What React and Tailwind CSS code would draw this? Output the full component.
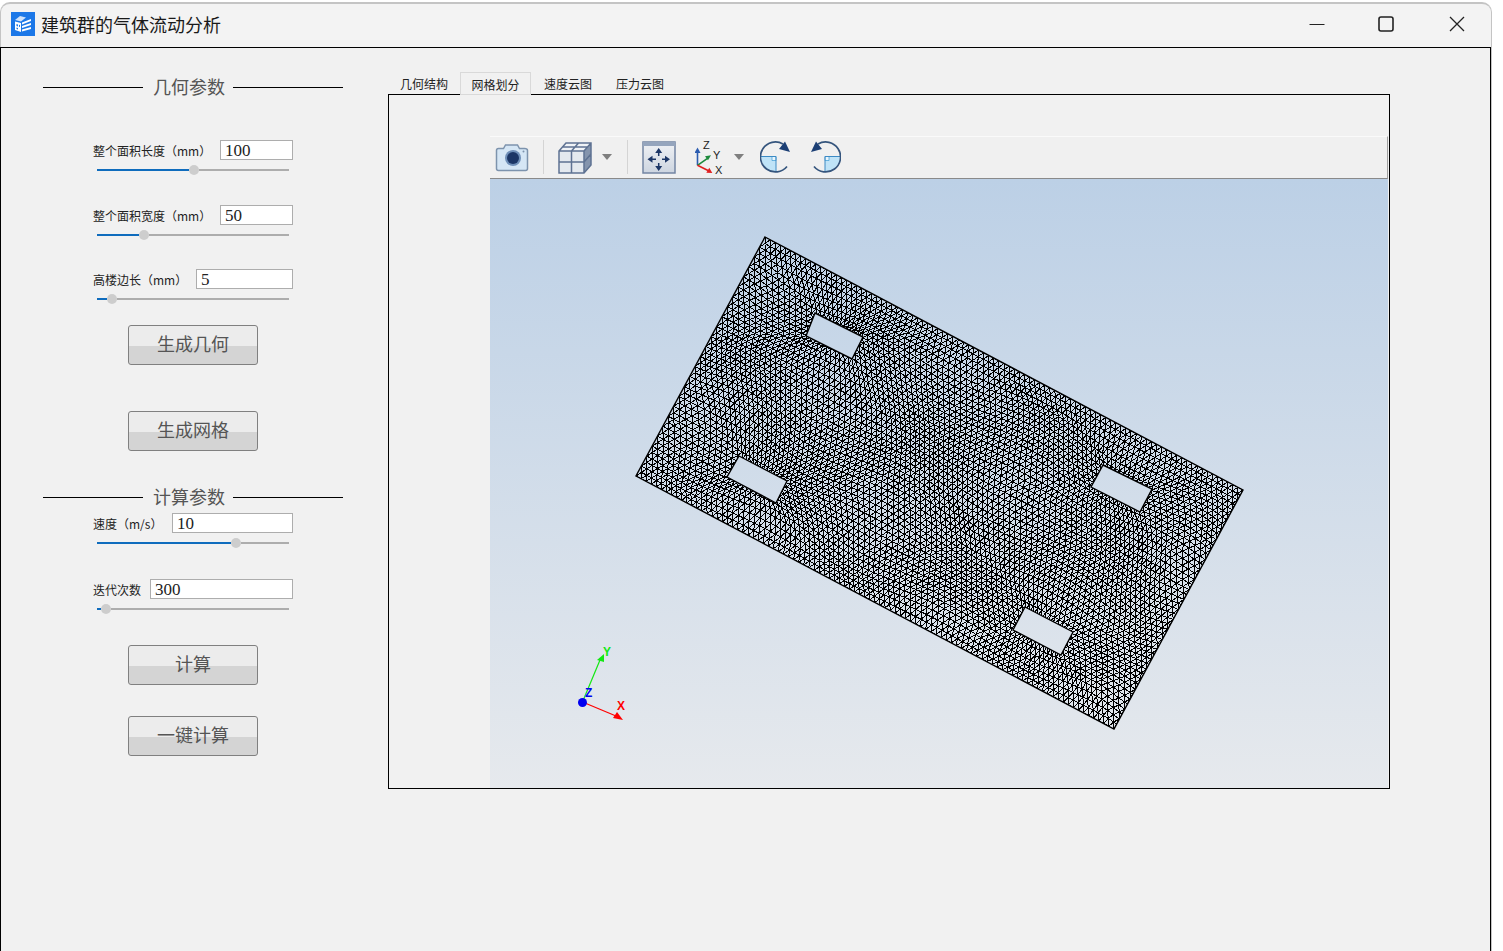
import React from 'react';

const CJK = 'font-["Noto_Sans_CJK_SC","Noto_Sans",sans-serif]';

// page coordinates of the mesh outline and its four holes
const A = [765, 237];
const B = [1243, 490];
const D = [636, 476];
const HOLES = [
  [[815, 313], [863, 337], [852, 359], [806, 336]],
  [[739, 456], [787, 481], [776, 503], [727, 477]],
  [[1103, 465], [1152, 489], [1140, 512], [1091, 487]],
  [[1025, 607], [1073, 632], [1061, 655], [1013, 630]],
];

function polyPath(points) {
  return 'M' + points.map((p) => p[0] + ' ' + p[1]).join('L') + 'Z';
}

function buildMesh() {
  const L = Math.hypot(B[0] - A[0], B[1] - A[1]);
  const H = Math.hypot(D[0] - A[0], D[1] - A[1]);
  const e = [(B[0] - A[0]) / L, (B[1] - A[1]) / L];
  const f = [(D[0] - A[0]) / H, (D[1] - A[1]) / H];
  const toLocal = (p) => {
    const dx = p[0] - A[0];
    const dy = p[1] - A[1];
    const det = e[0] * f[1] - e[1] * f[0];
    return [(dx * f[1] - dy * f[0]) / det, (dy * e[0] - dx * e[1]) / det];
  };
  const centers = HOLES.map((h) => {
    const pts = h.map(toLocal);
    return [pts.reduce((s, p) => s + p[0], 0) / 4, pts.reduce((s, p) => s + p[1], 0) / 4];
  });

  const warp = (u, v) => {
    const edge = Math.min(u, L - u, v, H - v);
    const w = Math.min(edge / 24, 1);
    let du = 0;
    let dv = 0;
    centers.forEach(([cu, cv]) => {
      const nx = (u - cu) / 27;
      const ny = (v - cv) / 13;
      const d = Math.max(Math.abs(nx), Math.abs(ny), 0.001);
      const k = -0.72 * Math.exp(-d / 1.1);
      du += (u - cu) * k;
      dv += (v - cv) * k;
    });
    du += 4 * Math.sin(v / 24) * Math.sin(u / 38);
    dv += 4 * Math.sin(u / 30) * Math.sin(v / 33);
    const x = u + du * w;
    const y = v + dv * w;
    return [
      Math.round((A[0] + e[0] * x + f[0] * y) * 10) / 10,
      Math.round((A[1] + e[1] * x + f[1] * y) * 10) / 10,
    ];
  };

  const nu = 94;
  const nv = 48;
  let d = '';
  for (let j = 0; j <= nv; j++) {
    for (let i = 0; i <= nu; i++) {
      const off = j % 2 ? 0.5 : 0;
      const u = (Math.min(i + off, nu) * L) / nu;
      const v = (j * H) / nv;
      const p = warp(u, v);
      const seg = (q) => {
        d += 'M' + p[0] + ' ' + p[1] + 'L' + q[0] + ' ' + q[1];
      };
      if (i < nu) seg(warp((Math.min(i + 1 + off, nu) * L) / nu, v));
      if (j < nv) {
        const v2 = ((j + 1) * H) / nv;
        const off2 = j % 2 ? 0 : 0.5;
        seg(warp((Math.min(i + off2, nu) * L) / nu, v2));
        const other = j % 2 ? i + 1 : i - 1;
        if (other >= 0 && other <= nu) seg(warp((Math.min(other + off2, nu) * L) / nu, v2));
      }
    }
  }
  return d;
}

const C = [1114, 729];
const OUTLINE = polyPath([A, B, C, D]);
const HOLE_PATH = HOLES.map(polyPath).join('');
const MESH = buildMesh();

function Logo() {
  return (
    <svg width="24" height="24" viewBox="0 0 24 24" className="shrink-0">
      <rect width="24" height="24" fill="#1c78e8" />
      <path d="M4 8L9 4l6 1.500L10 9.500z" fill="#cfe2fa" />
      <path d="M4 9.500L10 11v9l-6-2z" fill="#fff" />
      <path d="M5.500 12l1.500.4v2l-1.500-.4zM8 12.700l1 .3v2l-1-.3zM5.500 15.500l1.500.4v1.600l-1.500-.4z" fill="#1c78e8" />
      <path d="M11 10.500L20 7v2l-9 3.500zM11 14l9-3v2l-9 3zM11 17.500l9-2.500v2l-9 2.500z" fill="#fff" />
    </svg>
  );
}

function WindowControls() {
  return (
    <div className="flex items-center">
      <svg width="16" height="16" viewBox="0 0 16 16" className="mr-[53px]">
        <path d="M0.500 8.500h15" stroke="#222" strokeWidth="1" />
      </svg>
      <svg width="16" height="16" viewBox="0 0 16 16" className="mr-[55px]">
        <rect x="1" y="1" width="14" height="14" rx="2" fill="none" stroke="#222" strokeWidth="1.600" />
      </svg>
      <svg width="16" height="16" viewBox="0 0 16 16">
        <path d="M1 1l14 14M15 1L1 15" stroke="#222" strokeWidth="1.300" />
      </svg>
    </div>
  );
}

function Section({ title, className }) {
  return (
    <div className={`flex items-center ml-[42px] w-[300px] h-[24px] ${className}`}>
      <div className="w-[100px] h-px bg-black" />
      <div className={`${CJK} w-[90px] pl-[2px] -translate-y-px text-center text-[18px] leading-[24px] text-[#555]`}>{title}</div>
      <div className="w-[110px] h-px bg-black" />
    </div>
  );
}

function ParamRow({ label, labelClass, value, thumb, className }) {
  return (
    <div className={`ml-[92px] w-[200px] ${className}`}>
      <div className="flex items-center h-[20px]">
        <div className={`${CJK} ${labelClass} shrink-0 translate-y-px text-[12px] leading-[20px] text-[#222] whitespace-nowrap`}>{label}</div>
        <input
          readOnly
          value={value}
          className='flex-1 min-w-0 h-[20px] border border-[#adadad] bg-white pl-[4px] pt-[2px] font-["Liberation_Serif",serif] text-[17px] leading-[18px] text-[#222] outline-none'
        />
      </div>
      <div className="flex items-center ml-[4px] w-[192px] h-[10px] mt-[5px]">
        <div className="h-[2px] bg-[#0f6cbd]" style={{ width: thumb - 102 }} />
        <div className="w-[10px] h-[10px] shrink-0 rounded-full bg-[#cdcdcd]" />
        <div className="flex-1 h-[2px] bg-[#adadad]" />
      </div>
    </div>
  );
}

function ActionButton({ label, className }) {
  return (
    <div
      className={`${CJK} ml-[127px] w-[130px] h-[40px] pb-[4px] flex items-center justify-center border border-[#808080] rounded-[3px] bg-[linear-gradient(#ececec_52%,#d4d4d4_52%)] text-[18px] text-[#555] ${className}`}
    >
      {label}
    </div>
  );
}

function Caret() {
  return (
    <svg width="10" height="6" viewBox="0 0 10 6" className="shrink-0">
      <path d="M0 0h10L5 6z" fill="#7f7f7f" />
    </svg>
  );
}

function CameraIcon() {
  return (
    <svg width="34" height="29" viewBox="0 0 34 29" className="shrink-0">
      <path d="M1.500 7.500q0-2 2-2h5l2-3.500h12l2 3.500h5q3 0 3 2v18q0 2-2 2h-27q-2 0-2-2z" fill="#d5e6f5" stroke="#7d93ad" strokeWidth="1.500" />
      <circle cx="18" cy="15" r="8" fill="#6f8fb8" />
      <circle cx="18" cy="15" r="6" fill="#1c3666" />
      <circle cx="28.500" cy="8.500" r="1" fill="#7d93ad" />
    </svg>
  );
}

function CubeIcon() {
  return (
    <svg width="34" height="33" viewBox="0 0 34 33" className="shrink-0">
      <path d="M1 10l7-8h25v22l-7 8H1z" fill="#e4e9ef" />
      <path d="M26 10l7-8v22l-7 8z" fill="#8494ad" />
      <path d="M1 10l7-8h25l-7 8z" fill="#f0f3f6" />
      <path d="M1 10l7-8h25v22l-7 8H1zM1 10h25v22M26 10l7-8M13.500 10v22M1 21h25M13.500 10l7-8M5 6h25M26 21l7-8" fill="none" stroke="#5e7292" strokeWidth="1.500" />
    </svg>
  );
}

function FitIcon() {
  return (
    <svg width="34" height="33" viewBox="0 0 34 33" className="shrink-0">
      <defs>
        <linearGradient id="fitBg" x1="0" y1="0" x2="0" y2="1">
          <stop offset="0" stopColor="#f0f2f5" />
          <stop offset="1" stopColor="#cdd5e0" />
        </linearGradient>
      </defs>
      <rect x="1" y="1" width="32" height="31" fill="url(#fitBg)" stroke="#7385a3" strokeWidth="1.500" />
      <rect x="1" y="1" width="32" height="4" fill="#95a5bd" />
      <path d="M16.700 11v4M16.700 22v4M10 18.300h4M20 18.300h4" stroke="#1c3666" strokeWidth="1.500" />
      <path d="M16.700 7l-3.500 5h7zM16.700 30l-3.500-5h7zM5.500 18.300l5-3.500v7zM28 18.300l-5-3.500v7z" fill="#1c3666" />
    </svg>
  );
}

function AxesIcon() {
  return (
    <svg width="29" height="39" viewBox="0 -3 29 39" className="shrink-0">
      <path d="M2.500 24.300V10" stroke="#2b5cb0" strokeWidth="1.600" />
      <path d="M2.500 6.500l-3 5.500h6z" fill="#2b5cb0" />
      <path d="M2.500 24.300l10-7" stroke="#1d8a3c" strokeWidth="1.600" />
      <path d="M16 14.300l-6 1 3 4z" fill="#1d8a3c" />
      <path d="M2.500 24.300l11 5.500" stroke="#e02020" strokeWidth="1.600" />
      <path d="M17.300 32l-6-.2 3-5z" fill="#e02020" />
      <text x="8" y="8" fontSize="11" fontFamily="Liberation Sans" fill="#222">Z</text>
      <text x="18" y="18" fontSize="11" fontFamily="Liberation Sans" fill="#222">Y</text>
      <text x="20" y="33" fontSize="11" fontFamily="Liberation Sans" fill="#222">X</text>
    </svg>
  );
}

function RotateIcon({ flip }) {
  return (
    <svg width="32" height="32" viewBox="0 0 32 32" className={flip ? 'shrink-0 -scale-x-100' : 'shrink-0'}>
      <path d="M1 15.500a15 15 0 0 0 15 15v-15z" fill="#bfe3f7" />
      <path d="M12 15.500h4v4h-4z" fill="#e9f6fd" stroke="#3c9ad2" strokeWidth="0.700" />
      <path d="M0.500 15.500H16v15" fill="none" stroke="#3c8ac4" strokeWidth="1" />
      <path d="M23 3A15 15 0 1 0 27 25.500" fill="none" stroke="#35557d" strokeWidth="1.700" />
      <path d="M25 0.500L30 11 19 8z" fill="#1c3f75" />
    </svg>
  );
}

function Toolbar() {
  return (
    <div className="flex items-center h-[43px] shrink-0 bg-[#f0f0f0] border-t border-t-[#fafafa] border-b border-b-[#8a8a8a] border-r border-r-[#a0a0a0] pl-[5px] pb-px">
      <CameraIcon />
      <div className="w-px h-[34px] bg-[#d4d4d4] ml-[14px] mr-[14px] shrink-0" />
      <CubeIcon />
      <div className="ml-[10px]"><Caret /></div>
      <div className="w-px h-[34px] bg-[#d4d4d4] ml-[15px] mr-[14px] shrink-0" />
      <FitIcon />
      <div className="ml-[19px]"><AxesIcon /></div>
      <div className="ml-[10px]"><Caret /></div>
      <div className="ml-[16px]"><RotateIcon /></div>
      <div className="ml-[17px]"><RotateIcon flip /></div>
    </div>
  );
}

function MeshView() {
  return (
    <svg viewBox="490 179 898 609" className="flex-1 w-full bg-[linear-gradient(#bcd0e6,#e6e9ed)]">
      <defs>
        <clipPath id="meshClip">
          <path d={OUTLINE + HOLE_PATH} clipRule="evenodd" />
        </clipPath>
      </defs>
      <path d={MESH} clipPath="url(#meshClip)" fill="none" stroke="#000" strokeWidth="1" shapeRendering="crispEdges" />
      <path d={OUTLINE + HOLE_PATH} fill="none" stroke="#000" strokeWidth="1.400" />

      <path d="M582.500 702L600 660" stroke="#12e812" strokeWidth="1.200" fill="none" />
      <path d="M604 654L597 660 604 662z" fill="#12e812" />
      <path d="M582.500 702L616 716" stroke="#f00" strokeWidth="1.200" fill="none" />
      <path d="M623 720L613 718 617 712z" fill="#f00" />
      <circle cx="582.500" cy="702.500" r="4.500" fill="#0000f0" />
      <text x="603" y="656" fontSize="12" fontWeight="bold" fontFamily="Liberation Sans" fill="#12e812">Y</text>
      <text x="585" y="697" fontSize="12" fontWeight="bold" fontFamily="Liberation Sans" fill="#0000f0">Z</text>
      <text x="617" y="710" fontSize="12" fontWeight="bold" fontFamily="Liberation Sans" fill="#f00">X</text>
    </svg>
  );
}

const TABS = ['几何结构', '网格划分', '速度云图', '压力云图'];

export default function App() {
  return (
    <div className="w-[1503px] h-[951px] overflow-hidden bg-white pt-[2px]">
      <div className="w-[1492px] h-[949px] flex flex-col bg-[#f3f3f3] rounded-t-[10px] border-t-2 border-x border-[#c4c4c4]">
        <div className="flex items-center justify-between h-[43px] shrink-0 pl-[10px] pr-[26px] pb-[3px]">
          <div className="flex items-center gap-[6px]">
            <Logo />
            <span className={`${CJK} text-[18px] leading-[24px] text-[#1a1a1a]`}>建筑群的气体流动分析</span>
          </div>
          <WindowControls />
        </div>

        <div className="flex flex-1 min-h-0 bg-[#f1f1f1] border border-black border-b-0 -mx-px mr-0">
          <div className="w-[387px] shrink-0">
            <Section title="几何参数" className="mt-[27px]" />
            <ParamRow label="整个面积长度（mm）" labelClass="w-[127px]" value="100" thumb={194} className="mt-[41px]" />
            <ParamRow label="整个面积宽度（mm）" labelClass="w-[127px]" value="50" thumb={144} className="mt-[30px]" />
            <ParamRow label="高楼边长（mm）" labelClass="w-[103px]" value="5" thumb={112} className="mt-[29px]" />
            <ActionButton label="生成几何" className="mt-[21px]" />
            <ActionButton label="生成网格" className="mt-[46px]" />
            <Section title="计算参数" className="mt-[34px]" />
            <ParamRow label="速度（m/s）" labelClass="w-[79px]" value="10" thumb={236} className="mt-[4px]" />
            <ParamRow label="迭代次数" labelClass="w-[57px]" value="300" thumb={106} className="mt-[31px]" />
            <ActionButton label="计算" className="mt-[31px]" />
            <ActionButton label="一键计算" className="mt-[31px]" />
          </div>

          <div className="pt-[24px]">
            <div className="flex h-[23px] relative z-10 -mb-px">
              {TABS.map((t, i) => (
                <div
                  key={t}
                  className={
                    i === 1
                      ? `${CJK} w-[71px] mr-px text-center text-[12px] leading-[24px] text-[#222] bg-[#f1f1f1] border border-[#d9d9d9]`
                      : `${CJK} w-[72px] text-center text-[12px] leading-[24px] text-[#222]`
                  }
                >
                  {t}
                </div>
              ))}
            </div>
            <div className="w-[1002px] h-[695px] flex flex-col border border-black pl-[101px] pt-[41px]">
              <div className="flex flex-col flex-1 min-h-0 w-[898px]">
                <Toolbar />
                <MeshView />
              </div>
            </div>
          </div>
        </div>
      </div>
    </div>
  );
}
